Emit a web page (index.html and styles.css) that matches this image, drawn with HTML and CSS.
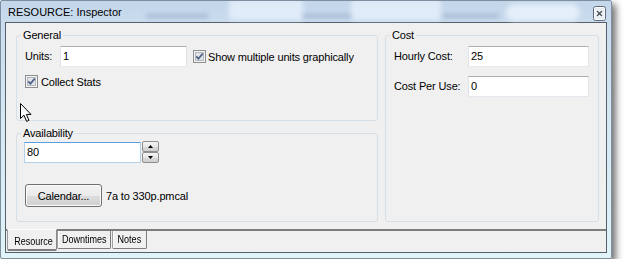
FILE: index.html
```html
<!DOCTYPE html>
<html>
<head>
<meta charset="utf-8">
<link rel="stylesheet" href="styles.css">
</head>
<body>
<div class="window">
  <div class="glass">
    <div class="blob box b1"></div>
    <div class="blob box b2"></div>
    <div class="blob pill b3"></div>
    <div class="blob line l1"></div>
    <div class="blob line l2"></div>
    <div class="blob line l3"></div>
  </div>
  <div class="titlebar">
    <span class="title">RESOURCE: Inspector</span>
    <span class="close">
      <svg width="13" height="15" viewBox="0 0 13 15">
        <rect x="0.5" y="0.5" width="12" height="14" rx="2" fill="#e6edf4" stroke="#5f6a76"/>
        <rect x="1.5" y="1.5" width="10" height="12" rx="1" fill="none" stroke="#ffffff" stroke-opacity="0.8"/>
        <path d="M4.5 5.5 L8.5 9.5 M8.5 5.5 L4.5 9.5" stroke="#ffffff" stroke-width="3" stroke-linecap="square"/>
        <path d="M4.5 5.5 L8.5 9.5 M8.5 5.5 L4.5 9.5" stroke="#454c55" stroke-width="1.4" stroke-linecap="square"/>
      </svg>
    </span>
  </div>
  <div class="client">
    <div class="page">
      <div class="col-left">
        <fieldset class="group general">
          <legend>General</legend>
          <div class="row">
            <span class="label units-label">Units:</span>
            <span class="input units-input">1</span>
            <span class="check check-show">
              <svg width="13" height="13" viewBox="0 0 13 13"><rect x="0.5" y="0.5" width="12" height="12" fill="#f4f4f4" stroke="#8e8f8f"/><rect x="2.5" y="2.5" width="8" height="8" fill="#e2e4e8" stroke="#b3b8be"/><path d="M3.3 6.4 L5.4 8.8 L9.7 3.6" fill="none" stroke="#4a5e85" stroke-width="1.7"/></svg>
              <span>Show multiple units graphically</span>
            </span>
          </div>
          <div class="row row-collect">
            <span class="check">
              <svg width="13" height="13" viewBox="0 0 13 13"><rect x="0.5" y="0.5" width="12" height="12" fill="#f4f4f4" stroke="#8e8f8f"/><rect x="2.5" y="2.5" width="8" height="8" fill="#e2e4e8" stroke="#b3b8be"/><path d="M3.3 6.4 L5.4 8.8 L9.7 3.6" fill="none" stroke="#4a5e85" stroke-width="1.7"/></svg>
              <span class="collect-text">Collect Stats</span>
            </span>
          </div>
        </fieldset>
        <fieldset class="group availability">
          <legend>Availability</legend>
          <div class="row spin-row">
            <span class="input focused avail-input">80</span>
            <span class="spin">
              <span class="spin-btn"><svg width="5" height="3" viewBox="0 0 5 3"><path d="M0 3 L5 3 L2.5 0 Z" fill="#000"/></svg></span>
              <span class="spin-btn"><svg width="5" height="3" viewBox="0 0 5 3"><path d="M0 0 L5 0 L2.5 3 Z" fill="#000"/></svg></span>
            </span>
          </div>
          <div class="row cal-row">
            <span class="button">Calendar...</span>
            <span class="cal-text">7a to 330p.pmcal</span>
          </div>
        </fieldset>
      </div>
      <fieldset class="group cost">
        <legend>Cost</legend>
        <div class="row">
          <span class="label cost-label">Hourly Cost:</span>
          <span class="input cost-input">25</span>
        </div>
        <div class="row row-cpu">
          <span class="label cost-label">Cost Per Use:</span>
          <span class="input cost-input">0</span>
        </div>
      </fieldset>
    </div>
    <div class="tabs">
      <span class="tab selected"><span class="tab-text">Resource</span></span>
      <span class="tab downtimes"><span class="tab-text">Downtimes</span></span>
      <span class="tab notes"><span class="tab-text">Notes</span></span>
    </div>
  </div>
  <svg class="cursor" width="13" height="20" viewBox="0 0 13 20">
    <path d="M0.5 0.5 L0.5 15.5 L4 12.2 L6.6 18.4 L8.9 17.4 L6.4 11.4 L11 11.4 Z" fill="#ffffff" stroke="#000000" stroke-width="1" stroke-linejoin="miter"/>
  </svg>
</div>
</body>
</html>
```

FILE: styles.css
```css
html, body {
  margin: 0;
  padding: 0;
  background: #ffffff;
}
body {
  font-family: "Liberation Sans", Arial, sans-serif;
  font-size: 11px;
  color: #000;
}
.window {
  position: relative;
  width: 612px;
  height: 259px;
  box-sizing: border-box;
  border: 1px solid #7f8e9e;
  border-radius: 2px;
  padding: 0 4px 5px 4px;
  background: linear-gradient(180deg, #c3d6ea 0px, #cadcee 22px, #d6e8f3 120px, #e0f4f9 259px);
  box-shadow: 4px 4px 7px rgba(0,0,0,0.55);
  display: flex;
  flex-direction: column;
}
.glass {
  position: absolute;
  left: 0;
  top: 0;
  right: 0;
  height: 22px;
  overflow: hidden;
  pointer-events: none;
}
.blob {
  position: absolute;
  filter: blur(2.5px);
}
.box {
  top: -2px;
  height: 21px;
  background: rgba(232, 242, 252, 0.75);
  border-radius: 3px;
}
.b1 { left: 228px; width: 74px; }
.b2 { left: 350px; width: 90px; }
.pill { top: 3px; height: 17px; left: 505px; width: 74px; border-radius: 9px; background: rgba(235, 244, 252, 0.8); }
.line {
  top: 14px;
  height: 2px;
  background: rgba(70, 100, 140, 0.55);
}
.l1 { left: 145px; width: 62px; }
.l2 { left: 302px; width: 48px; }
.l3 { left: 442px; width: 56px; }
.titlebar {
  position: relative;
  height: 21px;
  display: flex;
  justify-content: space-between;
  align-items: flex-start;
  padding: 0 1px 0 3px;
}
.title {
  font-size: 11px;
  line-height: 14px;
  padding-top: 4px;
  color: #000;
}
.close {
  display: block;
  width: 13px;
  height: 15px;
  margin-top: 5px;
}
.close svg { display: block; }
.client {
  flex: 1;
  border: 1px solid #56606b;
  background: #f0f0f0;
  display: flex;
  flex-direction: column;
  min-height: 0;
  letter-spacing: -0.15px;
}
.page {
  height: 208px;
  box-sizing: border-box;
  padding: 6px 7px 0 10px;
  border-bottom: 2px solid #7d7d7d;
  display: flex;
  gap: 7px;
}
.col-left {
  width: 362px;
  display: flex;
  flex-direction: column;
}
.group {
  margin: 0;
  border: 1px solid #d5dfe5;
  border-radius: 3px;
  padding: 5px 8px 0 8px;
  box-sizing: border-box;
  min-width: 0;
}
.group legend {
  font-size: 11px;
  line-height: 12px;
  padding: 0 2px;
  margin-left: -4px;
}
.general { height: 92px; }
.availability {
  height: 95px;
  margin-top: 6px;
  padding: 2px 7px 0 7px;
}
.availability legend { margin-left: -3px; }
.cost {
  width: 214px;
  height: 193px;
}
.row {
  display: flex;
  align-items: center;
}
.label {
  white-space: nowrap;
  line-height: 21px;
}
.units-label { width: 35px; }
.input {
  display: block;
  box-sizing: border-box;
  height: 21px;
  line-height: 19px;
  padding-left: 2px;
  background: #ffffff;
  border: 1px solid #e2e3ea;
  border-top-color: #abadb3;
  border-bottom-color: #e3e9ef;
}
.units-input { width: 127px; }
.check {
  display: flex;
  align-items: center;
  gap: 2px;
  white-space: nowrap;
}
.check svg { display: block; }
.check-show { margin-left: 6px; }
.row-collect { margin-top: 8px; }
.collect-text { margin-left: 1px; }
.spin-row { align-items: flex-start; }
.avail-input {
  width: 117px;
  margin-top: 1px;
}
.focused {
  border-color: #b5cfe7;
  border-top-color: #5d9ee0;
}
.spin {
  display: flex;
  flex-direction: column;
  margin-left: 1px;
}
.spin-btn {
  width: 17px;
  height: 11px;
  box-sizing: border-box;
  border: 1px solid #8f8f8f;
  border-radius: 2px;
  background: linear-gradient(180deg, #f4f4f4 0%, #e7e7e7 50%, #d9d9d9 51%, #cfcfcf 100%);
  display: flex;
  align-items: center;
  justify-content: center;
}
.spin-btn svg { display: block; }
.cal-row { margin-top: 21px; }
.button {
  display: flex;
  align-items: center;
  justify-content: center;
  width: 77px;
  height: 23px;
  box-sizing: border-box;
  margin-left: 1px;
  border: 1px solid #707070;
  border-radius: 3px;
  background: linear-gradient(180deg, #f2f2f2 0%, #ebebeb 50%, #dddddd 51%, #cfcfcf 100%);
  box-shadow: inset 0 0 0 1px #fbfbfb;
}
.cal-text { margin-left: 4px; }
.cost-label { width: 74px; }
.cost-input { width: 121px; }
.row-cpu { margin-top: 9px; }
.tabs {
  display: flex;
  align-items: flex-start;
  padding-left: 1px;
  font-size: 11px;
  letter-spacing: 0;
}
.tab {
  display: flex;
  justify-content: center;
  box-sizing: border-box;
  white-space: nowrap;
  line-height: 13px;
}
.tab-text {
  display: block;
  transform: scaleX(0.82);
}
.selected {
  width: 50px;
  height: 22px;
  margin-top: -2px;
  padding-top: 5px;
  padding-left: 3px;
  background: #f0f0f0;
  border-top: 1px solid #fbfbfb;
  border-left: 1px solid #9a9a9a;
  border-right: 1px solid #8a8a8a;
  border-bottom: 2px solid #7d7d7d;
  border-radius: 0 0 2px 2px;
}
.downtimes, .notes {
  height: 18px;
  padding-top: 2px;
  background: #f0f0f0;
  border-left: 1px solid #9c9c9c;
  border-right: 1px solid #7d7d7d;
  border-bottom: 1px solid #7d7d7d;
  box-shadow: inset 1px 0 0 #ffffff;
  border-radius: 0 0 2px 2px;
}
.downtimes { width: 54px; }
.notes { width: 35px; margin-left: 1px; }
.cursor {
  position: absolute;
  left: 19px;
  top: 102px;
  display: block;
}
```
